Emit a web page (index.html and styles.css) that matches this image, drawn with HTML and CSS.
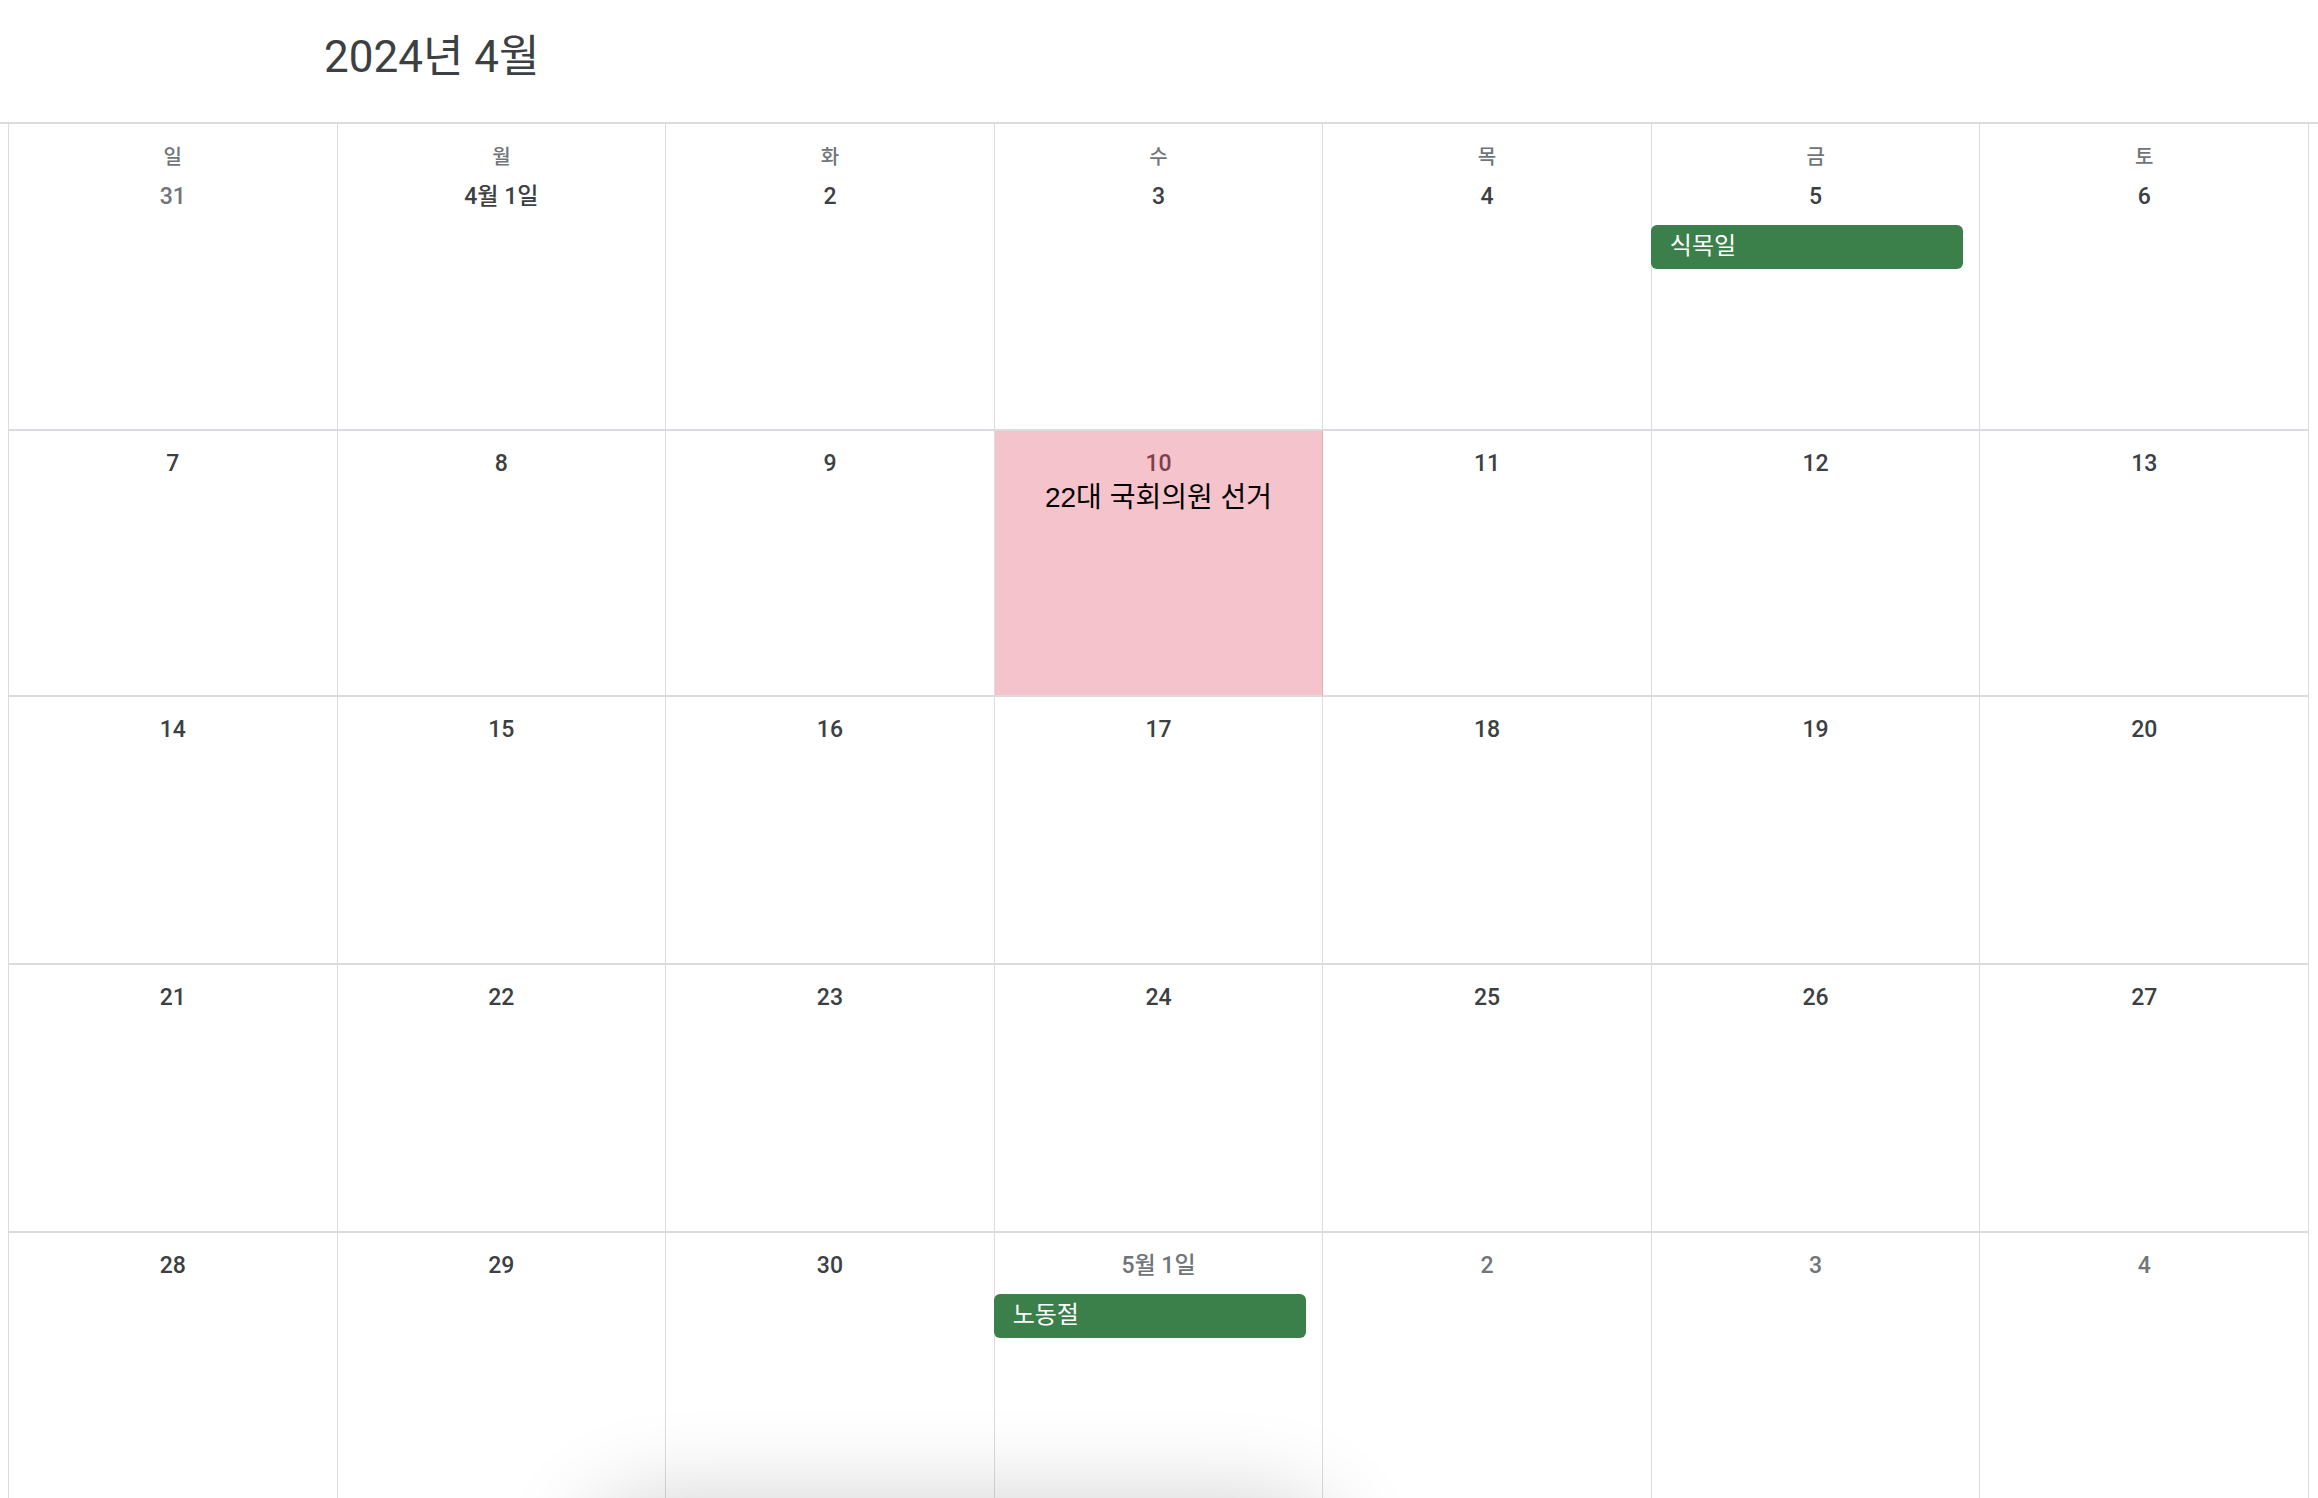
FILE: index.html
```html
<!DOCTYPE html>
<html>
<head>
    <title>2024년 4월</title>
    <link rel="stylesheet" href="styles.css">
</head>
<body>
    <div class="page">
        <header class="topbar">
            <h1 class="month-title">2024년 4월</h1>
        </header>

        <div class="calendar">
            <!-- week 1 -->
            <div class="day first-week"><div class="weekday">일</div><div class="date other">31</div></div>
            <div class="day first-week"><div class="weekday">월</div><div class="date">4월 1일</div></div>
            <div class="day first-week"><div class="weekday">화</div><div class="date">2</div></div>
            <div class="day first-week"><div class="weekday">수</div><div class="date">3</div></div>
            <div class="day first-week"><div class="weekday">목</div><div class="date">4</div></div>
            <div class="day first-week">
                <div class="weekday">금</div><div class="date">5</div>
                <div class="event-chip">식목일</div>
            </div>
            <div class="day first-week"><div class="weekday">토</div><div class="date">6</div></div>

            <!-- week 2 -->
            <div class="day"><div class="date">7</div></div>
            <div class="day"><div class="date">8</div></div>
            <div class="day"><div class="date">9</div></div>
            <div class="day highlighted">
                <div class="date">10</div>
                <div class="day-title">22대 국회의원 선거</div>
            </div>
            <div class="day"><div class="date">11</div></div>
            <div class="day"><div class="date">12</div></div>
            <div class="day"><div class="date">13</div></div>

            <!-- week 3 -->
            <div class="day"><div class="date">14</div></div>
            <div class="day"><div class="date">15</div></div>
            <div class="day"><div class="date">16</div></div>
            <div class="day"><div class="date">17</div></div>
            <div class="day"><div class="date">18</div></div>
            <div class="day"><div class="date">19</div></div>
            <div class="day"><div class="date">20</div></div>

            <!-- week 4 -->
            <div class="day"><div class="date">21</div></div>
            <div class="day"><div class="date">22</div></div>
            <div class="day"><div class="date">23</div></div>
            <div class="day"><div class="date">24</div></div>
            <div class="day"><div class="date">25</div></div>
            <div class="day"><div class="date">26</div></div>
            <div class="day"><div class="date">27</div></div>

            <!-- week 5 -->
            <div class="day"><div class="date">28</div></div>
            <div class="day"><div class="date">29</div></div>
            <div class="day"><div class="date">30</div></div>
            <div class="day">
                <div class="date other">5월 1일</div>
                <div class="event-chip">노동절</div>
            </div>
            <div class="day"><div class="date other">2</div></div>
            <div class="day"><div class="date other">3</div></div>
            <div class="day"><div class="date other">4</div></div>
        </div>

        <div class="bottom-dock"></div>
    </div>
</body>
</html>
```

FILE: styles.css
```css
body {
    margin: 0;
    background-color: #fff;
    font-family: Roboto, "Noto Sans CJK KR", sans-serif;
    color: #3c4043;
}

.page {
    height: 100vh;
    overflow: hidden;
}

/* Month header */
.topbar {
    height: 124px;
    border-bottom: 2px solid #dadce0;
    display: flex;
    align-items: center;
    padding-left: 324px;
    box-sizing: border-box;
}

.month-title {
    margin: 0 0 16px 0;
    font-size: 44px;
    font-weight: 400;
    color: #3c4043;
}

/* Month grid */
.calendar {
    display: grid;
    grid-template-columns: repeat(7, 1fr);
    grid-template-rows: 307px 266px 268px 268px 268px;
    margin: 0 9px 0 8px;
    border-left: 1px solid #dadce0;
}

.day {
    border-right: 1px solid #dadce0;
    border-bottom: 2px solid #dadce0;
    padding-top: 17px;
    box-sizing: border-box;
    min-width: 0;
}

.weekday {
    text-align: center;
    font-size: 20px;
    font-weight: 500;
    line-height: 32px;
    height: 40px;
    color: #70757a;
}

.date {
    text-align: center;
    font-size: 23px;
    font-weight: 500;
    line-height: 32px;
    color: #3c4043;
}

.date.other {
    color: #70757a;
}

.event-chip {
    margin: 12px 16px 0 -1px;
    height: 44px;
    line-height: 42px;
    padding-left: 19px;
    border-radius: 6px;
    background-color: #3b7f4a;
    color: #fff;
    font-size: 24px;
}

/* Election day */
.highlighted {
    background-color: #f4c3cb;
    border-right-color: #e2adb7;
}

.highlighted .date {
    color: #7f3f4d;
}

.day-title {
    text-align: center;
    font-family: "Liberation Sans", "Noto Sans CJK KR", sans-serif;
    font-size: 28px;
    line-height: 36px;
    color: #000;
}

/* Shadow of the bar sitting just below the window */
.bottom-dock {
    position: fixed;
    left: 600px;
    width: 720px;
    bottom: -140px;
    height: 120px;
    border-radius: 60px;
    background-color: #fff;
    box-shadow: 0 0 90px 20px rgba(0, 0, 0, 0.18);
}
```
